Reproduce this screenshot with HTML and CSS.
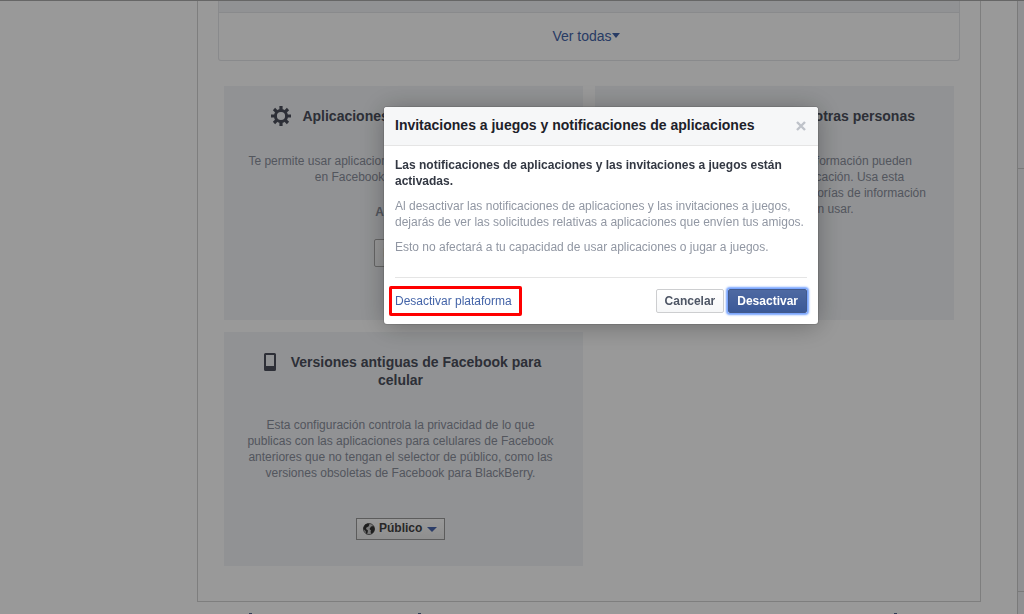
FILE: index.html
```
<!DOCTYPE html>
<html lang="es">
<head>
    <meta charset="UTF-8">
    <meta name="viewport" content="width=device-width, initial-scale=1.0">
    <title>Configuración de aplicaciones</title>
    <link rel="stylesheet" href="styles.css">
</head>
<body>
    <div class="page">
        <div class="column">
            <main class="content">
                <section class="app-list">
                    <div class="app-list-row"></div>
                    <a href="#" class="see-all">Ver todas<svg width="8" height="5" viewBox="0 0 8 5"><path d="M0 0h8L4 5z" fill="currentColor"/></svg></a>
                </section>

                <div class="cards">
                    <section class="card">
                        <h2 class="card-title">
                            <svg width="20" height="20" viewBox="0 0 20 20">
                                <path d="M10 0v4M10 16v4M0 10h4M16 10h4M3 3l2.600 2.600M14.400 14.400L17 17M3 17l2.600-2.600M14.400 5.600L17 3" stroke="currentColor" stroke-width="3.200"/>
                                <circle cx="10" cy="10" r="5.600" fill="none" stroke="currentColor" stroke-width="3"/>
                            </svg>Aplicaciones, sitios web y plugins
                        </h2>
                        <p>Te permite usar aplicaciones, plugins, juegos y sitios web<br>en Facebook y en otros lugares.</p>
                        <p class="status">Activado</p>
                        <button type="button" class="btn">Editar</button>
                    </section>

                    <section class="card">
                        <h2 class="card-title">
                            <svg width="20" height="20" viewBox="0 0 20 20"><circle cx="10" cy="5" r="4" fill="currentColor"/><path d="M4 18c0-10 12-10 12 0z" fill="currentColor"/></svg>Aplicaciones que usan otras personas
                        </h2>
                        <p>Las personas que pueden ver tu información pueden<br>compartirla cuando usan una aplicación. Usa esta<br>configuración para controlar las categorías de información<br>que las personas pueden usar.</p>
                    </section>

                    <section class="card">
                        <h2 class="card-title">
                            <svg width="20" height="20" viewBox="0 0 20 20"><path fill="currentColor" fill-rule="evenodd" d="M5.500 1h9Q16 1 16 2.500v15Q16 19 14.500 19h-9Q4 19 4 17.500v-15Q4 1 5.500 1zM6 3v11h8V3z"/></svg>Versiones antiguas de Facebook para celular
                        </h2>
                        <p>Esta configuración controla la privacidad de lo que publicas con las aplicaciones para celulares de Facebook anteriores que no tengan el selector de público, como las versiones obsoletas de Facebook para BlackBerry.</p>
                        <label class="audience">
                            <svg width="12" height="12" viewBox="0 0 12 12">
                                <circle cx="6" cy="6" r="5.500" fill="#ccc" stroke="#666"/>
                                <path d="M.5 4.500L2 1.500 5 .5l1.500 1-1 2-2 1L3 6l2 1.500L4.500 10l-1 1.200L2.500 8 .5 6zM8 3.500L10.500 3l1.200 3-1 3L8.500 11 7.500 9 8 7.500 6.500 6z" fill="#333"/>
                            </svg>
                            <select aria-label="Público">
                                <option>Público</option>
                            </select>
                            <svg width="10" height="5" viewBox="0 0 10 5"><path d="M0 0h10L5 5z" fill="#4a66ad"/></svg>
                        </label>
                    </section>
                </div>
            </main>
            <footer class="footer"><i></i><i></i><i></i></footer>
        </div>
        <aside class="ticker">
            <div class="ticker-top"></div>
            <div class="ticker-list"></div>
        </aside>
    </div>

    <div class="overlay">
        <div class="dialog" role="dialog" aria-labelledby="dialogTitle">
            <header class="dialog-header">
                <h1 id="dialogTitle">Invitaciones a juegos y notificaciones de aplicaciones</h1>
                <button type="button" class="close" aria-label="Cerrar">
                    <svg width="10" height="10" viewBox="0 0 10 10"><path d="M1 1l8 8M9 1L1 9" stroke="currentColor" stroke-width="2.400"/></svg>
                </button>
            </header>
            <div class="dialog-body">
                <p class="lead">Las notificaciones de aplicaciones y las invitaciones a juegos están activadas.</p>
                <p>Al desactivar las notificaciones de aplicaciones y las invitaciones a juegos, dejarás de ver las solicitudes relativas a aplicaciones que envíen tus amigos.</p>
                <p>Esto no afectará a tu capacidad de usar aplicaciones o jugar a juegos.</p>
            </div>
            <footer class="dialog-footer">
                <a href="#" class="platform-link">Desactivar plataforma</a>
                <button type="button" class="btn">Cancelar</button>
                <button type="button" class="btn btn-primary">Desactivar</button>
            </footer>
        </div>
    </div>
</body>
</html>
```
FILE: styles.css
```
* {
    margin: 0;
    padding: 0;
    box-sizing: border-box;
}

body {
    font-family: "Liberation Sans", Arial, sans-serif;
    font-size: 12px;
    line-height: 16px;
    color: #8a8f9c;
    background: #fff;
    overflow: hidden;
}

a {
    color: #4464a8;
    text-decoration: none;
}

button,
select {
    font: inherit;
}

.page {
    display: flex;
    min-height: 100vh;
    padding-left: 197px;
    border-top: 1px solid #aaa;
}

.column {
    flex: 1;
    display: flex;
    flex-direction: column;
    margin-right: 36px;
}

.content {
    padding: 0 20px 35px;
    border: 1px solid #d2d2d2;
    border-top: 0;
}

.app-list {
    border: 1px solid #e5e6e9;
    border-top: 0;
    border-radius: 0 0 3px 3px;
}

.app-list-row {
    height: 12px;
    background: #f2f4f7;
    border-bottom: 1px solid #e5e6e9;
}

.see-all {
    display: flex;
    justify-content: center;
    align-items: center;
    height: 47px;
    padding: 0 6px 2px 0;
    font-size: 14px;
}

.cards {
    display: grid;
    grid-template-columns: 1fr 1fr;
    gap: 12px;
    padding: 25px 6px 0;
}

.card {
    display: flex;
    flex-direction: column;
    align-items: center;
    min-height: 234px;
    padding: 21px 26px 20px 20px;
    background: #f2f4f7;
    text-align: center;
}

.card-title {
    margin-bottom: 28px;
    padding: 0 10px;
    font-size: 14px;
    line-height: 18px;
    color: #4b4f5c;
}

.card-title svg {
    margin: -2px 11px -2px 0;
    vertical-align: -3px;
}

.card p {
    margin-bottom: 19px;
}

.card .status {
    font-weight: bold;
}

.btn {
    height: 24px;
    padding: 0 8px;
    border: 1px solid #cdced0;
    border-radius: 2px;
    background: linear-gradient(#fff, #f6f7f8);
    color: #4e5665;
    font-weight: bold;
}

.card .btn {
    height: 28px;
    border-color: #aaa;
}

.btn-primary {
    background: linear-gradient(#4e69a2, #3b5998);
    border-color: #435a8b;
    color: #fff;
    box-shadow: 0 0 2px 2px #75a3ff;
}

.audience {
    display: flex;
    align-items: center;
    gap: 4px;
    height: 22px;
    margin-top: 18px;
    padding: 0 7px 0 6px;
    border: 1px solid #999;
    background: linear-gradient(#fff, #eee);
}

.audience select {
    appearance: none;
    padding-bottom: 2px;
    border: 0;
    background: none;
    color: #444;
    font-weight: bold;
}

.footer {
    display: flex;
    padding: 11px 0 0 52px;
}

.footer i {
    width: 3px;
    height: 2px;
    background: #53648f;
}

.footer i:nth-child(2) {
    margin-left: 166px;
}

.footer i:last-child {
    margin: 0 84px 0 auto;
}

.ticker {
    display: flex;
    flex-direction: column;
    width: 7px;
    border-left: 1px solid #ccc;
    background: #f0f1f4;
}

.ticker-top {
    height: 168px;
    border-bottom: 1px solid #ccc;
}

.ticker-list {
    height: 423px;
    border-bottom: 1px solid #ccc;
}

.overlay {
    position: fixed;
    inset: 0;
    display: flex;
    justify-content: center;
    align-items: flex-start;
    padding: 107px 0 0 178px;
    background: rgba(0, 0, 0, 0.4);
}

.dialog {
    width: 434px;
    border-radius: 3px;
    background: #fff;
    box-shadow: 0 2px 26px rgba(0, 0, 0, 0.3), 0 0 0 1px rgba(0, 0, 0, 0.1);
}

.dialog-header {
    display: flex;
    justify-content: space-between;
    align-items: center;
    height: 39px;
    padding: 0 12px 0 11px;
    border-bottom: 1px solid #e5e5e5;
    border-radius: 3px 3px 0 0;
    background: #f6f7f8;
}

.dialog-header h1 {
    padding-bottom: 2px;
    font-size: 14px;
    line-height: 18px;
    color: #1d2129;
}

.close {
    display: flex;
    border: 0;
    background: none;
    color: #bec2c9;
}

.dialog-body {
    padding: 11px 11px 22px;
    color: #9197a3;
}

.dialog-body p + p {
    margin-top: 9px;
}

.dialog-body .lead {
    color: #333843;
    font-weight: bold;
}

.dialog-footer {
    display: flex;
    align-items: center;
    gap: 4px;
    margin: 0 11px;
    padding: 11px 0;
    border-top: 1px solid #e5e5e5;
}

.platform-link {
    position: relative;
    margin-right: auto;
}

/* red highlight drawn around the link */
.platform-link::after {
    content: "";
    position: absolute;
    inset: -7px -10px -7px -6px;
    border: 3px solid #f00;
    border-radius: 2px;
}
```
